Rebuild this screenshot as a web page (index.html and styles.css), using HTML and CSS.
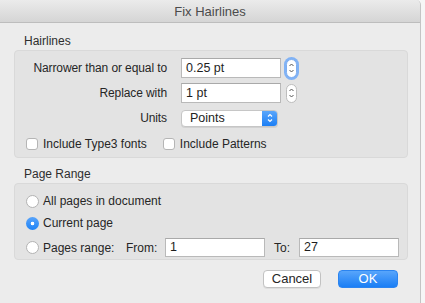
FILE: index.html
```html
<!DOCTYPE html>
<html>
<head>
<meta charset="utf-8">
<link rel="stylesheet" href="styles.css">
</head>
<body>
<div class="window">
  <div class="titlebar">Fix Hairlines</div>
  <div class="content">
    <div class="section-label">Hairlines</div>
    <div class="box box-hair">
      <div class="row row1">
        <div class="label">Narrower than or equal to</div>
        <div class="field w100">0.25 pt</div>
        <div class="stepper focused">
          <svg width="7" height="14" viewBox="0 0 7 14"><path d="M1.5 5 L3.5 3 L5.5 5 M1.5 9 L3.5 11 L5.5 9" fill="none" stroke="#555" stroke-width="1"/></svg>
        </div>
      </div>
      <div class="row row2">
        <div class="label">Replace with</div>
        <div class="field w100">1 pt</div>
        <div class="stepper">
          <svg width="7" height="14" viewBox="0 0 7 14"><path d="M1.5 5 L3.5 3 L5.5 5 M1.5 9 L3.5 11 L5.5 9" fill="none" stroke="#555" stroke-width="1"/></svg>
        </div>
      </div>
      <div class="row row3">
        <div class="label">Units</div>
        <div class="popup">
          <span class="popup-text">Points</span>
          <span class="popup-arrows">
            <svg width="8" height="12" viewBox="0 0 8 12"><path d="M2 4.5 L4 2.5 L6 4.5 M2 7.5 L4 9.5 L6 7.5" fill="none" stroke="#fff" stroke-width="1.2"/></svg>
          </span>
        </div>
      </div>
      <div class="checks">
        <label class="check"><span class="cb"></span>Include Type3 fonts</label>
        <label class="check"><span class="cb"></span>Include Patterns</label>
      </div>
    </div>
    <div class="section-label second">Page Range</div>
    <div class="box box-range">
      <div class="radio-row r1"><span class="rb"></span>All pages in document</div>
      <div class="radio-row r2"><span class="rb on"></span>Current page</div>
      <div class="radio-row r3">
        <span class="rb"></span><span class="pr">Pages range:</span>
        <span class="from">From:</span>
        <div class="field range-field">1</div>
        <span class="to">To:</span>
        <div class="field range-field">27</div>
      </div>
    </div>
    <div class="buttons">
      <div class="btn cancel">Cancel</div>
      <div class="btn ok">OK</div>
    </div>
  </div>
</div>
</body>
</html>
```

FILE: styles.css
```css
html, body {
  margin: 0;
  padding: 0;
}
body {
  background: #f6f6f6;
  font-family: "Liberation Sans", Arial, sans-serif;
  font-size: 12px;
  color: #262626;
  width: 425px;
  height: 303px;
  overflow: hidden;
}
.window {
  width: 420px;
  height: 303px;
  background: #ececec;
  border-right: 1px solid #c4c4c4;
  border-top-right-radius: 5px;
  overflow: hidden;
}
.titlebar {
  height: 22px;
  border-bottom: 1px solid #bdbdbd;
  background: linear-gradient(#ebebeb, #d5d5d5);
  text-align: center;
  line-height: 23px;
  font-size: 13px;
  color: #4b4b4b;
}
.content {
  padding: 0 12px 0 14px;
}
.section-label {
  margin-top: 11px;
  padding-left: 10px;
  height: 15px;
  line-height: 15px;
  color: #2e2e2e;
}
.section-label.second {
  margin-top: 9px;
}
.box {
  margin-top: 1px;
  background: #e3e3e3;
  border: 1px solid #d9d9d9;
  border-radius: 4px;
  box-sizing: border-box;
}
.box-hair {
  height: 108px;
  padding-top: 7px;
}
.row {
  display: flex;
  align-items: center;
  height: 20px;
}
.row2 { margin-top: 5px; }
.row3 { margin-top: 6px; height: 18px; }
.label {
  width: 152px;
  text-align: right;
  margin-right: 14px;
  letter-spacing: -0.1px;
}
.field {
  box-sizing: border-box;
  height: 20px;
  background: #fff;
  border: 1px solid #b9b9b9;
  border-top-color: #a9a9a9;
  padding-left: 4px;
  line-height: 18px;
  font-size: 12.5px;
  color: #1e1e1e;
}
.w100 { width: 100px; }
.stepper {
  box-sizing: border-box;
  margin-left: 5px;
  width: 11px;
  height: 19px;
  border: 1px solid #bdbdbd;
  border-radius: 6px;
  background: #fff;
  display: flex;
  align-items: center;
  justify-content: center;
}
.stepper.focused {
  border: 1px solid #7eaef0;
  box-shadow: 0 0 0 2px #80b2f5;
}
.popup {
  box-sizing: border-box;
  width: 97px;
  height: 17px;
  display: flex;
  background: #fff;
  border: 1px solid #c6c6c6;
  border-radius: 4px;
  overflow: hidden;
  box-shadow: 0 1px 0 rgba(0,0,0,0.08);
}
.popup-text {
  flex: 1;
  padding-left: 8px;
  line-height: 15px;
  font-size: 12.5px;
  color: #222;
}
.popup-arrows {
  width: 15px;
  background: linear-gradient(#5aa6fb, #1c7ff5);
  display: flex;
  align-items: center;
  justify-content: center;
}
.checks {
  display: flex;
  align-items: center;
  margin-top: 10px;
  padding-left: 11px;
  height: 14px;
}
.check {
  display: flex;
  align-items: center;
}
.check + .check { margin-left: 16px; }
.cb {
  box-sizing: border-box;
  width: 12px;
  height: 12px;
  border: 1px solid #b5b5b5;
  border-radius: 3px;
  background: #fff;
  margin-right: 5px;
}
.box-range {
  height: 77px;
  padding-top: 10px;
  padding-left: 11px;
}
.radio-row {
  display: flex;
  align-items: center;
  height: 14px;
}
.r2 { margin-top: 8px; }
.r3 { margin-top: 8px; height: 19px; }
.rb {
  box-sizing: border-box;
  width: 13px;
  height: 13px;
  border-radius: 50%;
  border: 1px solid #b3b3b3;
  background: #fff;
  margin-right: 4px;
  flex: none;
}
.rb.on {
  border: none;
  background: radial-gradient(circle, #fff 0 1.6px, transparent 2.1px), linear-gradient(#58a4fb, #1f83f6);
}
.pr { width: 83px; }
.from { width: 39px; }
.to { margin-left: 9px; width: 25px; }
.range-field {
  width: 100px;
  height: 19px;
  line-height: 17px;
}
.buttons {
  display: flex;
  justify-content: flex-end;
  margin-top: 10px;
  padding-right: 10px;
}
.btn {
  box-sizing: border-box;
  height: 18px;
  line-height: 16px;
  text-align: center;
  border-radius: 4px;
  font-size: 13px;
}
.cancel {
  width: 58px;
  background: #fff;
  border: 1px solid #c2c2c2;
  color: #262626;
  box-shadow: 0 1px 0 rgba(0,0,0,0.06);
}
.ok {
  width: 60px;
  margin-left: 17px;
  background: linear-gradient(#58a5fb, #1a7ef5);
  border: 1px solid #2b84f0;
  color: #fff;
}
```
